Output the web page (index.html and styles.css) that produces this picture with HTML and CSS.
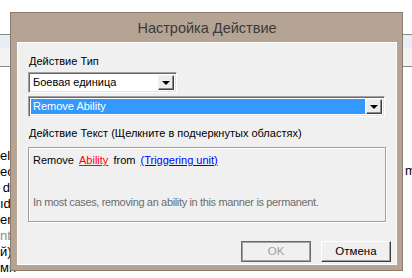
FILE: index.html
```html
<!DOCTYPE html>
<html>
  <head>
    <meta charset="utf-8">
    <title>Настройка Действие</title>
    <link rel="stylesheet" href="styles.css">
  </head>
<body>

  <div class="page">
    <div class="head-row"></div>
    <div class="sub-row"></div>
    <div class="list">
      <div class="item">ele</div>
      <div class="item">ec</div>
      <div class="item">d</div>
      <div class="item">ıds</div>
      <div class="item">em</div>
      <div class="item dim">nth</div>
      <div class="item">й)</div>
      <div class="item">мн</div>
    </div>
    <div class="right-note">m</div>
  </div>

  <div class="dialog">
    <div class="title">Настройка Действие</div>
    <div class="client">
      <div class="label">Действие Тип</div>

      <div class="combo combo-short">
        <div class="combo-text">Боевая единица</div>
        <div class="drop"><span class="arrow"></span></div>
      </div>

      <div class="combo combo-long">
        <div class="combo-text selected">Remove Ability</div>
        <div class="drop"><span class="arrow"></span></div>
      </div>

      <div class="label label2">Действие Текст (Щелкните в подчеркнутых областях)</div>

      <div class="textbox">
        <div class="phrase">
          Remove <a class="param red" href="JavaScript:void(0)">Ability</a> from <a class="param blue" href="JavaScript:void(0)">(Triggering unit)</a>
        </div>
        <div class="hint">In most cases, removing an ability in this manner is permanent.</div>
      </div>

      <div class="btnDiv">
        <div class="btn disabled">OK</div>
        <div class="btn">Отмена</div>
      </div>
    </div>
  </div>

</body>
</html>
```

FILE: styles.css
```css
html
{
  width: 100%;
  height: 100%;
  background-color: #ffffff;
}
body
{
  margin: 0;
  padding: 0;
  font-family: "Liberation Sans", Arial, sans-serif;
  font-size: 11px;
  color: #000000;
  overflow: hidden;
}
.page
{
  width: 412px;
  height: 278px;
  display: flex;
  flex-direction: column;
}
.head-row
{
  margin-top: 34px;
  height: 13px;
  border-top: 1px solid #8a8a8a;
  background-color: #e8eef7;
}
.sub-row
{
  height: 18px;
  border-bottom: 1px solid #8a8a8a;
  background-color: #f3f3f3;
}
.list
{
  margin-top: 81px;
  width: 10px;
}
.item
{
  height: 16px;
  line-height: 16px;
  font-size: 13px;
  text-align: right;
  white-space: nowrap;
}
.dim
{
  color: #8a8a8a;
}
.right-note
{
  position: absolute;
  left: 405px;
  top: 163px;
  font-size: 13px;
}

.dialog
{
  position: absolute;
  left: 10px;
  top: 12px;
  width: 393px;
  height: 259px;
  box-sizing: border-box;
  border: 1px solid #8a7b6e;
  background-color: #b5a494;
  display: flex;
  flex-direction: column;
  padding: 0 5px 5px 6px;
}
.title
{
  height: 29px;
  line-height: 31px;
  text-align: center;
  font-size: 14.5px;
  color: #3a3a3a;
}
.client
{
  flex: 1;
  background-color: #f0f0f0;
  border: 1px solid #ffffff;
  display: flex;
  flex-direction: column;
  padding: 11px 10px 0 10px;
}
.label
{
  height: 14px;
  line-height: 14px;
  padding-left: 1px;
}
.label2
{
  margin-top: 9px;
}
.combo
{
  display: flex;
  align-items: stretch;
  height: 21px;
  box-sizing: border-box;
  border: 1px solid;
  border-color: #a0a0a0 #ffffff #ffffff #a0a0a0;
  box-shadow: inset 1px 1px #6a6a6a, inset -1px -1px #e3e3e3;
  background-color: #ffffff;
  padding: 2px;
  margin-top: 4px;
}
.combo-short
{
  width: 149px;
}
.combo-long
{
  width: 357px;
  margin-top: 3px;
}
.combo-text
{
  flex: 1;
  line-height: 15px;
  padding-left: 2px;
}
.selected
{
  background-color: #3399ff;
  color: #ffffff;
  margin-right: 1px;
}
.drop
{
  width: 16px;
  box-sizing: border-box;
  border: 1px solid;
  border-color: #f4f4f4 #404040 #404040 #f4f4f4;
  box-shadow: inset -1px -1px #8a8a8a;
  background-color: #ececec;
  display: flex;
  justify-content: center;
  align-items: center;
}
.arrow
{
  width: 0;
  height: 0;
  border-left: 4px solid transparent;
  border-right: 4px solid transparent;
  border-top: 4px solid #000000;
  margin-top: 1px;
}
.textbox
{
  margin-top: 7px;
  width: 358px;
  height: 75px;
  box-sizing: border-box;
  border: 1px solid #a0a0a0;
  box-shadow: inset 1px 1px #ffffff, 1px 1px #ffffff;
  padding: 4px 4px 0 4px;
}
.phrase
{
  height: 16px;
  line-height: 16px;
  word-spacing: 2px;
}
.param
{
  text-decoration: underline;
  word-spacing: 0;
}
.red
{
  color: #ff0000;
}
.blue
{
  color: #0000ff;
}
.hint
{
  margin-top: 26px;
  line-height: 16px;
  color: #6d6d6d;
  letter-spacing: -0.35px;
}
.btnDiv
{
  margin-top: 19px;
  margin-right: -5px;
  display: flex;
  justify-content: flex-end;
  gap: 10px;
}
.btn
{
  width: 70px;
  height: 21px;
  box-sizing: border-box;
  border: 1px solid;
  border-color: #ffffff #404040 #404040 #ffffff;
  box-shadow: inset -1px -1px #a0a0a0;
  background-color: #f0f0f0;
  text-align: center;
  line-height: 19px;
  font-size: 11.5px;
}
.disabled
{
  border-color: #6a6a6a;
  box-shadow: inset 1px 1px #a0a0a0, inset -1px -1px #a0a0a0;
  color: #a0a0a0;
}
```
